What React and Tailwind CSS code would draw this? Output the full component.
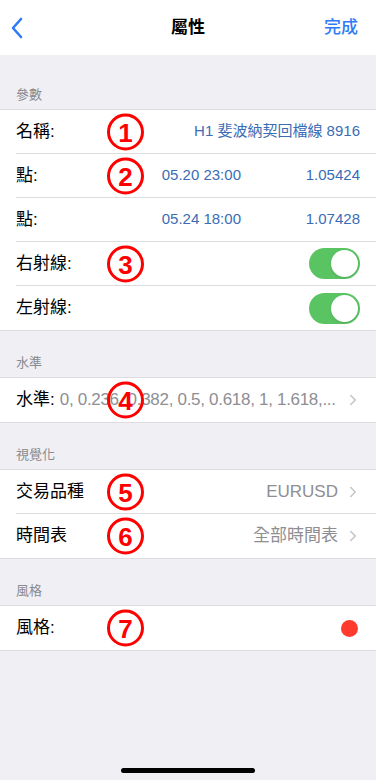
import { ChevronRight } from "lucide-react";

const font = { fontFamily: '"Liberation Sans", "Noto Sans CJK TC", sans-serif' };

const Mark = ({ n }) => (
  <span className="absolute left-[107px] top-1/2 -translate-y-1/2 w-[37px] h-[37px] rounded-full border-[3px] border-[#ff0000] flex items-center justify-center text-[#ff0000] text-[26px] font-bold leading-none">
    {n}
  </span>
);

const Toggle = () => (
  <div className="w-[51px] h-[31px] rounded-full bg-[#5ac463] p-[2px] flex justify-end">
    <div className="w-[27px] h-[27px] rounded-full bg-white shadow" />
  </div>
);

const Row = ({ label, mark, children, last }) => (
  <div className="relative h-[44px] pl-4">
    <div className={`h-full flex items-center pr-4 ${last ? "" : "border-b border-[#dcdce0]"}`}>
      <span className="text-[17px] text-black whitespace-nowrap">{label}</span>
      <div className="flex-1 flex items-center justify-end min-w-0">{children}</div>
    </div>
    {mark && <Mark n={mark} />}
  </div>
);

const Section = ({ title, children }) => (
  <div>
    <div className="px-4 pb-[5px] text-[13px] leading-[18px] text-[#8a8a8e]">{title}</div>
    <div className="bg-white border-y border-[#dcdce0]">{children}</div>
  </div>
);

const Chev = () => <ChevronRight className="w-[18px] h-[18px] text-[#c4c4c7] ml-[6px] -mr-[2px] shrink-0" strokeWidth={2} />;

export default function App() {
  return (
    <div style={font} className="w-[376px] h-[780px] bg-[#efeff4] flex flex-col relative overflow-hidden">
      {/* Nav bar */}
      <div className="h-[55px] bg-white flex items-center px-2 relative">
        <svg width="14" height="22" viewBox="0 0 14 22" className="ml-[2px]">
          <path d="M11 2 L3 11 L11 20" fill="none" stroke="#2f7bf6" strokeWidth="2.6" strokeLinecap="round" strokeLinejoin="round" />
        </svg>
        <div className="absolute left-0 right-0 text-center text-[17px] font-bold text-black pointer-events-none">屬性</div>
        <div className="ml-auto mr-[10px] text-[17px] text-[#2f7bf6] font-medium">完成</div>
      </div>

      <div className="flex flex-col gap-[23px] pt-[31px]">
        <Section title="參數">
          <Row label="名稱:" mark="1">
            <span className="text-[15px] text-[#3a6db5] whitespace-nowrap">H1 斐波納契回檔線 8916</span>
          </Row>
          <Row label="點:" mark="2">
            <div className="flex-1 flex justify-between pl-[124px]">
              <span className="text-[15px] text-[#3a6db5]">05.20 23:00</span>
              <span className="text-[15px] text-[#3a6db5]">1.05424</span>
            </div>
          </Row>
          <Row label="點:">
            <div className="flex-1 flex justify-between pl-[124px]">
              <span className="text-[15px] text-[#3a6db5]">05.24 18:00</span>
              <span className="text-[15px] text-[#3a6db5]">1.07428</span>
            </div>
          </Row>
          <Row label="右射線:" mark="3">
            <Toggle />
          </Row>
          <Row label="左射線:" last>
            <Toggle />
          </Row>
        </Section>

        <Section title="水準">
          <Row label="水準:" mark="4" last>
            <span className="flex-1 pl-[5px] text-[17px] tracking-[-0.3px] text-[#8e8e93] whitespace-nowrap">0, 0.236, 0.382, 0.5, 0.618, 1, 1.618,...</span>
            <Chev />
          </Row>
        </Section>

        <Section title="視覺化">
          <Row label="交易品種" mark="5">
            <span className="text-[17px] text-[#8e8e93]">EURUSD</span>
            <Chev />
          </Row>
          <Row label="時間表" mark="6" last>
            <span className="text-[17px] text-[#8e8e93]">全部時間表</span>
            <Chev />
          </Row>
        </Section>

        <Section title="風格">
          <Row label="風格:" mark="7" last>
            <div className="w-[17px] h-[17px] rounded-full bg-[#ff3b30] mr-[2px]" />
          </Row>
        </Section>
      </div>

      <div className="absolute bottom-[7px] left-[121px] w-[134px] h-[5px] rounded-full bg-black" />
    </div>
  );
}
